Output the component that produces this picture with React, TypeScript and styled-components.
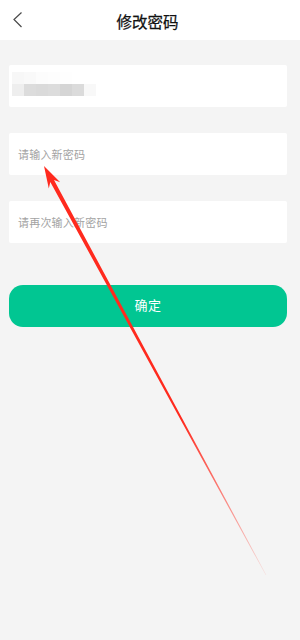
import React from "react";
import styled, { createGlobalStyle } from "styled-components";

const Global = createGlobalStyle`
  html, body { margin: 0; padding: 0; background: #f4f4f4; }
  body { font-family: "Noto Sans CJK SC", "Noto Sans", sans-serif; }
  * { box-sizing: border-box; }
`;

const Page = styled.div`
  position: relative;
  width: 300px;
  height: 640px;
  background: #f4f4f4;
  overflow: hidden;
`;

const Header = styled.header`
  height: 40px;
  background: #ffffff;
  display: flex;
  align-items: center;
  position: relative;
`;

const BackButton = styled.button`
  width: 32px;
  height: 40px;
  border: none;
  background: transparent;
  padding: 0 0 0 10px;
  display: flex;
  align-items: center;
`;

const Title = styled.h1`
  flex: 1;
  margin: 0 37px 0 0;
  padding-top: 2px;
  text-align: center;
  font-size: 15.5px;
  font-weight: 400;
  color: #111111;
  letter-spacing: 0;
  -webkit-text-stroke: 0.25px #111111;
`;

const Body = styled.main`
  display: flex;
  flex-direction: column;
  padding: 25px 13px 0 9px;
`;

const Field = styled.div<{ $mb: number }>`
  height: 42px;
  background: #ffffff;
  border-radius: 2px;
  margin-bottom: ${(p) => p.$mb}px;
  display: flex;
  align-items: center;
  padding-left: 9px;
`;

const ValueField = styled(Field)`
  align-items: flex-start;
  padding: 7px 0 0 3px;
`;

const Placeholder = styled.span`
  font-size: 11px;
  color: #a3a3a3;
  letter-spacing: 0.2px;
`;

const Mosaic = styled.div`
  display: grid;
  grid-template-columns: repeat(7, 12px);
  grid-template-rows: repeat(2, 12px);
`;

const Cell = styled.div<{ $c: string }>`
  background: ${(p) => p.$c};
`;

const Confirm = styled.button`
  height: 42px;
  border: none;
  border-radius: 14px;
  background: #01c692;
  color: #ffffff;
  font-family: "Noto Sans CJK SC", "Noto Sans", sans-serif;
  font-size: 13px;
  letter-spacing: 0.5px;
  padding: 0 0 3px 0;
`;

const Annotation = styled.svg`
  position: absolute;
  left: 0;
  top: 0;
  pointer-events: none;
`;

const mosaicColors = [
  "#f7f7f7", "#f9f9f9", "#fcfcfc", "#fdfdfd", "#fefefe", "#ffffff", "#ffffff",
  "#eeeeee", "#dcdcdc", "#dadada", "#dcdcdc", "#d5d5d5", "#dbdbdb", "#f8f8f8",
];

// arrow geometry
const T = { x: 44, y: 166 };
const E = { x: 266, y: 575 };
const dx = E.x - T.x;
const dy = E.y - T.y;
const len = Math.hypot(dx, dy);
const u = { x: dx / len, y: dy / len };
const n = { x: u.y, y: -u.x };
const pt = (b: { x: number; y: number }, a: number, w: number) =>
  `${(b.x + a * u.x + w * n.x).toFixed(1)},${(b.y + a * u.y + w * n.y).toFixed(1)}`;

const arrowPoints = [
  pt(T, 0, 0),
  pt(T, 22, 6.5),
  pt(T, 17, 2.1),
  pt(E, 0, 0.3),
  pt(E, 0, -0.3),
  pt(T, 17, -2.1),
  pt(T, 22, -6.5),
].join(" ");

export default function App() {
  return (
    <>
      <Global />
      <Page>
        <Header>
          <BackButton aria-label="返回">
            <svg width="12" height="18" viewBox="0 0 12 18">
              <path d="M11.5 1.5 L4 8.5 L11.5 16" fill="none" stroke="#4a4a4a" strokeWidth="1.2" />
            </svg>
          </BackButton>
          <Title>修改密码</Title>
        </Header>
        <Body>
          <ValueField $mb={26}>
            <Mosaic>
              {mosaicColors.map((c, i) => (
                <Cell key={i} $c={c} />
              ))}
            </Mosaic>
          </ValueField>
          <Field $mb={26}>
            <Placeholder>请输入新密码</Placeholder>
          </Field>
          <Field $mb={42}>
            <Placeholder>请再次输入新密码</Placeholder>
          </Field>
          <Confirm>确定</Confirm>
        </Body>
        <Annotation width="300" height="640" viewBox="0 0 300 640">
          <defs>
            <linearGradient id="fade" gradientUnits="userSpaceOnUse" x1="180" y1="420" x2="266" y2="575">
              <stop offset="0" stopColor="#ff2a1e" stopOpacity="1" />
              <stop offset="1" stopColor="#ff2a1e" stopOpacity="0.1" />
            </linearGradient>
          </defs>
          <polygon points={arrowPoints} fill="url(#fade)" />
        </Annotation>
      </Page>
    </>
  );
}
